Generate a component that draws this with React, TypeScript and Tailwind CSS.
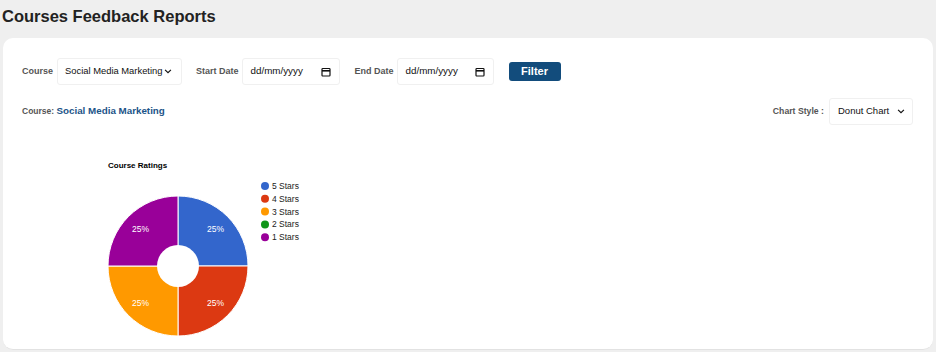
import React from 'react';

const ratings = [
  { label: '5 Stars', color: '#3366cc', value: 1 },
  { label: '4 Stars', color: '#dc3912', value: 1 },
  { label: '3 Stars', color: '#ff9900', value: 1 },
  { label: '2 Stars', color: '#109618', value: 0 },
  { label: '1 Stars', color: '#990099', value: 1 },
];

// Donut chart drawn like the Google Charts output
const DonutChart: React.FC = () => {
  const cx = 88;
  const cy = 118;
  const r = 70;
  const inner = 21;
  const total = ratings.reduce((s, d) => s + d.value, 0);
  let angle = -Math.PI / 2;
  const slices = ratings
    .filter((d) => d.value > 0)
    .map((d) => {
      const a0 = angle;
      const a1 = angle + (d.value / total) * Math.PI * 2;
      angle = a1;
      const x0 = cx + r * Math.cos(a0);
      const y0 = cy + r * Math.sin(a0);
      const x1 = cx + r * Math.cos(a1);
      const y1 = cy + r * Math.sin(a1);
      const mid = (a0 + a1) / 2;
      const large = a1 - a0 > Math.PI ? 1 : 0;
      return {
        ...d,
        path: `M${cx},${cy} L${x0},${y0} A${r},${r} 0 ${large} 1 ${x1},${y1} Z`,
        lx: cx + 53 * Math.cos(mid),
        ly: cy + 53 * Math.sin(mid),
        pct: Math.round((d.value / total) * 100),
      };
    });

  return (
    <svg width="260" height="200" viewBox="0 0 260 200" style={{ fontFamily: '"Liberation Sans", Arial, sans-serif' }}>
      <text x="18" y="20" fontSize="8" fontWeight="700" fill="#000">
        Course Ratings
      </text>
      {slices.map((s) => (
        <path key={s.label} d={s.path} fill={s.color} stroke="#fff" strokeWidth="1" />
      ))}
      <circle cx={cx} cy={cy} r={inner} fill="#fff" />
      {slices.map((s) => (
        <text key={s.label + 't'} x={s.lx} y={s.ly + 3} fontSize="8.5" fill="#fff" textAnchor="middle">
          {s.pct}%
        </text>
      ))}
      {ratings.map((d, i) => (
        <g key={d.label}>
          <circle cx="175" cy={38 + i * 12.8} r="4" fill={d.color} />
          <text x="182" y={41 + i * 12.8} fontSize="8.5" fill="#222">
            {d.label}
          </text>
        </g>
      ))}
    </svg>
  );
};

const CalendarIcon = () => (
  <svg width="10" height="10" viewBox="0 0 10 10" fill="none" stroke="#111" strokeWidth="1.2">
    <rect x="1" y="1.5" width="8" height="7.5" rx="0.8" />
    <path d="M1 3.8h8" strokeWidth="1.6" />
  </svg>
);

const Chevron = () => (
  <svg width="8" height="5" viewBox="0 0 9 6" fill="none" stroke="#111" strokeWidth="1.4">
    <path d="M1 1l3.5 3.5L8 1" />
  </svg>
);

export default function App() {
  return (
    <div className="w-[936px] h-[352px] bg-[#efefef] overflow-hidden" style={{ fontFamily: '"Liberation Sans", Arial, sans-serif' }}>
      <h1 className="pl-[2px] pt-[4px] h-[38px] text-[16.5px] font-bold text-[#222]">Courses Feedback Reports</h1>
      <div className="ml-[3px] w-[930px] h-[312px] bg-white rounded-[10px] border-b border-[#e2e2e2] pl-[19px] pr-[20px] pt-[20px]">
        <div className="flex items-center h-[27px] text-[9px] whitespace-nowrap">
          <span className="font-bold text-[#555]">Course</span>
          <div className="ml-[4px] w-[125px] h-[27px] border border-[#f0f0f0] rounded-[3px] flex items-center pl-[7px] pr-[6px] gap-[2px] text-[9.4px] text-[#111]">
            <span>Social Media Marketing</span>
            <Chevron />
          </div>
          <span className="ml-[14px] font-bold text-[#555]">Start Date</span>
          <div className="ml-[3px] w-[98px] h-[27px] border border-[#f0f0f0] rounded-[3px] flex items-center justify-between pl-[8px] pr-[8px] text-[9.8px] text-[#111]">
            <span>dd/mm/yyyy</span>
            <CalendarIcon />
          </div>
          <span className="ml-[15px] font-bold text-[#555]">End Date</span>
          <div className="ml-[3px] w-[97px] h-[27px] border border-[#f0f0f0] rounded-[3px] flex items-center justify-between pl-[8px] pr-[8px] text-[9.8px] text-[#111]">
            <span>dd/mm/yyyy</span>
            <CalendarIcon />
          </div>
          <button className="ml-[15px] w-[52px] h-[19px] bg-[#124c7c] rounded-[3px] text-white text-[11px] font-bold">Filter</button>
        </div>
        <div className="mt-[13px] flex items-center justify-between whitespace-nowrap">
          <div className="text-[8.5px] font-bold text-[#555]">
            Course: <span className="text-[9.8px] text-[#1c5488]">Social Media Marketing</span>
          </div>
          <div className="flex items-center">
            <span className="text-[8.7px] font-bold text-[#555]">Chart Style :</span>
            <div className="ml-[5px] w-[84px] h-[27px] border border-[#f0f0f0] rounded-[3px] flex items-center justify-between pl-[8px] pr-[7px] text-[9.5px] text-[#111]">
              <span>Donut Chart</span>
              <Chevron />
            </div>
          </div>
        </div>
        <div className="mt-[23px] ml-[68px]">
          <DonutChart />
        </div>
      </div>
    </div>
  );
}
